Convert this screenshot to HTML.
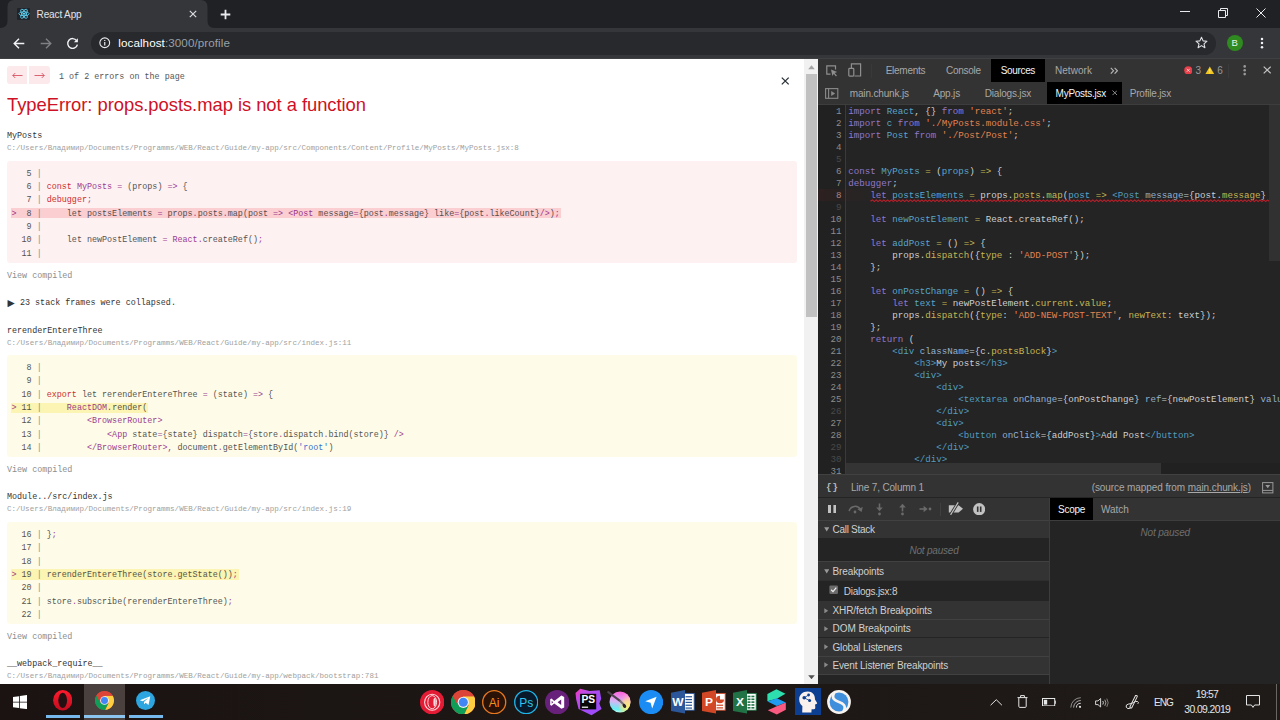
<!DOCTYPE html>
<html><head><meta charset="utf-8"><title>React App</title>
<style>
*{box-sizing:border-box;margin:0;padding:0}
html,body{width:1280px;height:720px;overflow:hidden;background:#fff;font-family:"Liberation Sans",sans-serif}
i{font-style:normal}
#root{position:relative;width:1280px;height:720px;overflow:hidden}
#root>div,#root>svg{position:absolute}
.t{white-space:pre}
.cl{opacity:.84}
.dc{opacity:.93}
.cl .k{color:#c80000}.cl .p{color:#881280}.cl .s{color:#1155cc}.cl .g{color:#777}
.dc .k{color:#9a7fd5}.dc .d{color:#5db0d7}.dc .s{color:#f28b54}.dc .o{color:#d2c057}.dc .t{color:#5db0d7}.dc .a{color:#9bbbdc}
</style></head><body>
<div id="root">
<!-- browser chrome -->
<div style="left:0.00px;top:0.00px;width:1280.00px;height:28.00px;background:#202124;"></div>
<svg style="left:0.00px;top:0.00px;" width="220" height="28" viewBox="0 0 220 28"><path d="M0 28 L0 28 Q7.5 28 7.5 21 L7.5 7 Q7.5 0 14.5 0 L200.5 0 Q207.5 0 207.5 7 L207.5 21 Q207.5 28 214.5 28 Z" fill="#35363a"/></svg>
<div style="left:0.00px;top:28.00px;width:1280.00px;height:30.50px;background:#35363a;"></div>
<div style="left:0.00px;top:58.00px;width:1280.00px;height:1.00px;background:#3f4043;"></div>
<div style="left:91.00px;top:31.50px;width:1125.00px;height:23.00px;background:#27292c;border-radius:12px"></div>
<div style="left:17.00px;top:7.50px;width:13.00px;height:12.50px;background:#20232a;border-radius:1px"></div>
<svg style="left:17.50px;top:8.00px;" width="12" height="11.5" viewBox="0 0 12 11.5"><g fill="none" stroke="#61dafb" stroke-width="0.8"><ellipse cx="6" cy="5.75" rx="5.2" ry="2"/><ellipse cx="6" cy="5.75" rx="5.2" ry="2" transform="rotate(60 6 5.75)"/><ellipse cx="6" cy="5.75" rx="5.2" ry="2" transform="rotate(120 6 5.75)"/></g><circle cx="6" cy="5.75" r="1.1" fill="#61dafb"/></svg>
<div class="t" style="left:36.60px;top:7.64px;font-family:'Liberation Sans',sans-serif;font-size:10px;line-height:13.0px;color:#e2e4e8;letter-spacing:-0.140px;">React App</div>
<svg style="left:189.00px;top:10.00px;" width="8" height="8" viewBox="0 0 8 8"><path d="M0.8 0.8 L7.2 7.2 M7.2 0.8 L0.8 7.2" stroke="#dadce0" stroke-width="1.2" fill="none"/></svg>
<svg style="left:219.50px;top:8.50px;" width="11" height="11" viewBox="0 0 11 11"><path d="M5.5 0.7 V10.3 M0.7 5.5 H10.3" stroke="#e8eaed" stroke-width="1.8" fill="none"/></svg>
<div style="left:1180.00px;top:11.00px;width:10.00px;height:1.00px;background:#e8eaed;"></div>
<svg style="left:1217.50px;top:7.50px;" width="10" height="10" viewBox="0 0 10 10"><path d="M0.5 2.5 H7.5 V9.5 H0.5 Z M2.5 2.5 V0.5 H9.5 V7.5 H7.5" stroke="#e8eaed" stroke-width="1" fill="none"/></svg>
<svg style="left:1256.00px;top:8.00px;" width="10" height="10" viewBox="0 0 10 10"><path d="M0.5 0.5 L9.5 9.5 M9.5 0.5 L0.5 9.5" stroke="#e8eaed" stroke-width="1" fill="none"/></svg>
<svg style="left:12.50px;top:37.50px;" width="12" height="11" viewBox="0 0 12 11"><path d="M6 0.8 L1.2 5.5 L6 10.2 M1.2 5.5 H11.3" stroke="#f1f3f4" stroke-width="1.4" fill="none"/></svg>
<svg style="left:39.50px;top:37.50px;" width="12" height="11" viewBox="0 0 12 11"><path d="M6 0.8 L10.8 5.5 L6 10.2 M10.8 5.5 H0.7" stroke="#7f8084" stroke-width="1.4" fill="none"/></svg>
<svg style="left:65.50px;top:36.50px;" width="13" height="13" viewBox="0 0 13 13"><path d="M10.6 3.6 A4.9 4.9 0 1 0 11.4 7.6" stroke="#f1f3f4" stroke-width="1.4" fill="none"/><path d="M11.9 1.2 V5.2 H7.9 Z" fill="#f1f3f4"/></svg>
<svg style="left:99.00px;top:37.30px;" width="11.5" height="11.5" viewBox="0 0 11.5 11.5"><circle cx="5.75" cy="5.75" r="4.9" stroke="#e8eaed" stroke-width="1.1" fill="none"/><path d="M5.75 2.9 V3.9 M5.75 5 V8.6" stroke="#e8eaed" stroke-width="1.2"/></svg>
<div class="t" style="left:118.30px;top:35.07px;font-family:'Liberation Sans',sans-serif;font-size:11.67px;line-height:15.17px;color:#9aa0a6;letter-spacing:0.069px;"><span style="color:#fff">localhost</span>:3000/profile</div>
<svg style="left:1195.00px;top:36.30px;" width="13" height="13" viewBox="0 0 13 13"><path d="M6.5 1.2 L8.1 4.9 L12 5.2 L9 7.8 L9.9 11.7 L6.5 9.6 L3.1 11.7 L4 7.8 L1 5.2 L4.9 4.9 Z" stroke="#dfe1e5" stroke-width="1.1" fill="none" stroke-linejoin="round"/></svg>
<div style="left:1226.50px;top:34.80px;width:16.50px;height:16.50px;background:#2f8a1f;border-radius:50%"></div>
<div class="t" style="left:1231.60px;top:36.93px;font-family:'Liberation Sans',sans-serif;font-size:9.5px;line-height:12.35px;color:#e9f3e6;">B</div>
<svg style="left:1259.50px;top:37.00px;" width="4" height="12" viewBox="0 0 4 12"><circle cx="2" cy="1.9" r="1.25" fill="#f1f3f4"/><circle cx="2" cy="6" r="1.25" fill="#f1f3f4"/><circle cx="2" cy="10.2" r="1.25" fill="#f1f3f4"/></svg>
<!-- error overlay page -->
<div style="left:0.00px;top:59.00px;width:804.20px;height:625.00px;background:#fff;"></div>
<div style="left:804.20px;top:59.00px;width:13.80px;height:625.00px;background:#f1f1f1;"></div>
<div style="left:805.70px;top:73.50px;width:11.00px;height:243.20px;background:#c1c1c1;"></div>
<svg style="left:807.50px;top:65.00px;" width="7" height="4.5" viewBox="0 0 7 4.5"><path d="M3.5 0.3 L6.8 4.2 H0.2 Z" fill="#a3a3a3"/></svg>
<svg style="left:807.50px;top:674.50px;" width="7" height="4.5" viewBox="0 0 7 4.5"><path d="M3.5 4.2 L6.8 0.3 H0.2 Z" fill="#505050"/></svg>
<div style="left:7.00px;top:66.00px;width:19.50px;height:18.00px;background:#fbe9eb;border-radius:3px 0 0 3px"></div>
<div style="left:29.00px;top:66.00px;width:20.50px;height:18.00px;background:#fbe9eb;border-radius:0 3px 3px 0"></div>
<svg style="left:11.50px;top:72.00px;" width="11" height="7" viewBox="0 0 11 7"><path d="M0.8 3.5 H10.5 M3.3 1 L0.8 3.5 L3.3 6" stroke="#d4364a" stroke-width="0.75" fill="none"/></svg>
<svg style="left:33.50px;top:72.00px;" width="11" height="7" viewBox="0 0 11 7"><path d="M0.5 3.5 H10.2 M7.7 1 L10.2 3.5 L7.7 6" stroke="#d4364a" stroke-width="0.75" fill="none"/></svg>
<div class="t" style="left:59.00px;top:71.70px;font-family:'Liberation Mono',monospace;font-size:8.4px;line-height:10.92px;color:#555;letter-spacing:0.004px;">1 of 2 errors on the page</div>
<div class="t" style="left:7.00px;top:92.86px;font-family:'Liberation Sans',sans-serif;font-size:18.4px;line-height:23.92px;color:#ce1126;letter-spacing:-0.042px;">TypeError: props.posts.map is not a function</div>
<svg style="left:781.00px;top:77.00px;" width="8.5" height="8" viewBox="0 0 8.5 8"><path d="M0.8 0.6 L7.7 7.4 M7.7 0.6 L0.8 7.4" stroke="#293238" stroke-width="1.3" fill="none"/></svg>
<div class="t" style="left:7.00px;top:130.80px;font-family:'Liberation Mono',monospace;font-size:8.4px;line-height:10.92px;color:#333;letter-spacing:0.003px;">MyPosts</div>
<div class="t" style="left:7.00px;top:143.58px;font-family:'Liberation Mono',monospace;font-size:7.55px;line-height:9.81px;color:#a0a0a0;letter-spacing:0.001px;">C:/Users/Владимир/Documents/Programms/WEB/React/Guide/my-app/src/Components/Content/Profile/MyPosts/MyPosts.jsx:8</div>
<div style="left:7.00px;top:161.00px;width:789.90px;height:101.50px;background:#fdf1f2;border-radius:3px"></div>
<div class="t cl" style="left:11.50px;top:168.70px;font-family:'Liberation Mono',monospace;font-size:8.4px;line-height:10.92px;color:#333;letter-spacing:0.003px;">   5<i class="g"> | </i></div>
<div class="t cl" style="left:11.50px;top:182.03px;font-family:'Liberation Mono',monospace;font-size:8.4px;line-height:10.92px;color:#333;letter-spacing:0.004px;">   6<i class="g"> | </i><i class="k">const</i> <i class="p">MyPosts</i> <i class="p">=</i> (props) <i class="p">=&gt;</i> {</div>
<div class="t cl" style="left:11.50px;top:195.37px;font-family:'Liberation Mono',monospace;font-size:8.4px;line-height:10.92px;color:#333;letter-spacing:0.004px;">   7<i class="g"> | </i><i class="k">debugger</i><i class="p">;</i></div>
<div style="left:11.00px;top:208.20px;width:549.67px;height:10.20px;background:#fbcfd2;"></div>
<div class="t cl" style="left:11.50px;top:208.70px;font-family:'Liberation Mono',monospace;font-size:8.4px;line-height:10.92px;color:#333;letter-spacing:0.004px;"><i class="p">&gt;</i>  8<i class="g"> | </i>    let postsElements <i class="p">=</i> props<i class="p">.</i>posts<i class="p">.</i>map(post <i class="p">=&gt;</i> <i class="p">&lt;</i><i class="p">Post</i> message<i class="p">=</i>{post<i class="p">.</i>message} like<i class="p">=</i>{post<i class="p">.</i>likeCount}<i class="p">/&gt;</i>)<i class="p">;</i></div>
<div class="t cl" style="left:11.50px;top:222.03px;font-family:'Liberation Mono',monospace;font-size:8.4px;line-height:10.92px;color:#333;letter-spacing:0.003px;">   9<i class="g"> | </i></div>
<div class="t cl" style="left:11.50px;top:235.37px;font-family:'Liberation Mono',monospace;font-size:8.4px;line-height:10.92px;color:#333;letter-spacing:0.004px;">  10<i class="g"> | </i>    let newPostElement <i class="p">=</i> <i class="p">React</i><i class="p">.</i>createRef()<i class="p">;</i></div>
<div class="t cl" style="left:11.50px;top:248.70px;font-family:'Liberation Mono',monospace;font-size:8.4px;line-height:10.92px;color:#333;letter-spacing:0.003px;">  11<i class="g"> | </i></div>
<div class="t" style="left:7.00px;top:271.10px;font-family:'Liberation Mono',monospace;font-size:8.4px;line-height:10.92px;color:#878e91;letter-spacing:0.004px;">View compiled</div>
<div class="t" style="left:7.5px;top:295.6px;font-family:'DejaVu Sans',sans-serif;font-size:9.4px;line-height:13px;color:#333">▶</div>
<div class="t" style="left:20.00px;top:298.30px;font-family:'Liberation Mono',monospace;font-size:8.4px;line-height:10.92px;color:#333;letter-spacing:0.004px;">23 stack frames were collapsed.</div>
<div class="t" style="left:7.00px;top:326.10px;font-family:'Liberation Mono',monospace;font-size:8.4px;line-height:10.92px;color:#333;letter-spacing:0.004px;">rerenderEntereThree</div>
<div class="t" style="left:7.00px;top:338.58px;font-family:'Liberation Mono',monospace;font-size:7.55px;line-height:9.81px;color:#a0a0a0;letter-spacing:0.001px;">C:/Users/Владимир/Documents/Programms/WEB/React/Guide/my-app/src/index.js:11</div>
<div style="left:7.00px;top:355.30px;width:789.90px;height:101.50px;background:#fefce9;border-radius:3px"></div>
<div class="t cl" style="left:11.50px;top:363.00px;font-family:'Liberation Mono',monospace;font-size:8.4px;line-height:10.92px;color:#333;letter-spacing:0.003px;">   8<i class="g"> | </i></div>
<div class="t cl" style="left:11.50px;top:376.33px;font-family:'Liberation Mono',monospace;font-size:8.4px;line-height:10.92px;color:#333;letter-spacing:0.003px;">   9<i class="g"> | </i></div>
<div class="t cl" style="left:11.50px;top:389.67px;font-family:'Liberation Mono',monospace;font-size:8.4px;line-height:10.92px;color:#333;letter-spacing:0.004px;">  10<i class="g"> | </i><i class="k">export</i> let rerenderEntereThree <i class="p">=</i> (state) <i class="p">=&gt;</i> {</div>
<div style="left:11.00px;top:402.50px;width:137.21px;height:10.20px;background:#fbf4b2;"></div>
<div class="t cl" style="left:11.50px;top:403.00px;font-family:'Liberation Mono',monospace;font-size:8.4px;line-height:10.92px;color:#333;letter-spacing:0.004px;"><i class="p">&gt;</i> 11<i class="g"> | </i>    <i class="p">ReactDOM</i><i class="p">.</i>render(</div>
<div class="t cl" style="left:11.50px;top:416.33px;font-family:'Liberation Mono',monospace;font-size:8.4px;line-height:10.92px;color:#333;letter-spacing:0.004px;">  12<i class="g"> | </i>        <i class="p">&lt;</i><i class="p">BrowserRouter</i><i class="p">&gt;</i></div>
<div class="t cl" style="left:11.50px;top:429.67px;font-family:'Liberation Mono',monospace;font-size:8.4px;line-height:10.92px;color:#333;letter-spacing:0.004px;">  13<i class="g"> | </i>            <i class="p">&lt;</i><i class="p">App</i> state<i class="p">=</i>{state} dispatch<i class="p">=</i>{store<i class="p">.</i>dispatch<i class="p">.</i>bind(store)} <i class="p">/&gt;</i></div>
<div class="t cl" style="left:11.50px;top:443.00px;font-family:'Liberation Mono',monospace;font-size:8.4px;line-height:10.92px;color:#333;letter-spacing:0.004px;">  14<i class="g"> | </i>        <i class="p">&lt;/</i><i class="p">BrowserRouter</i><i class="p">&gt;,</i> document<i class="p">.</i>getElementById(<i class="s">'root'</i>)</div>
<div class="t" style="left:7.00px;top:464.70px;font-family:'Liberation Mono',monospace;font-size:8.4px;line-height:10.92px;color:#878e91;letter-spacing:0.004px;">View compiled</div>
<div class="t" style="left:7.00px;top:491.97px;font-family:'Liberation Mono',monospace;font-size:8.4px;line-height:10.92px;color:#333;letter-spacing:0.004px;">Module../src/index.js</div>
<div class="t" style="left:7.00px;top:504.75px;font-family:'Liberation Mono',monospace;font-size:7.55px;line-height:9.81px;color:#a0a0a0;letter-spacing:0.001px;">C:/Users/Владимир/Documents/Programms/WEB/React/Guide/my-app/src/index.js:19</div>
<div style="left:7.00px;top:522.17px;width:789.90px;height:101.50px;background:#fefce9;border-radius:3px"></div>
<div class="t cl" style="left:11.50px;top:529.87px;font-family:'Liberation Mono',monospace;font-size:8.4px;line-height:10.92px;color:#333;letter-spacing:0.004px;">  16<i class="g"> | </i>}<i class="p">;</i></div>
<div class="t cl" style="left:11.50px;top:543.20px;font-family:'Liberation Mono',monospace;font-size:8.4px;line-height:10.92px;color:#333;letter-spacing:0.003px;">  17<i class="g"> | </i></div>
<div class="t cl" style="left:11.50px;top:556.54px;font-family:'Liberation Mono',monospace;font-size:8.4px;line-height:10.92px;color:#333;letter-spacing:0.003px;">  18<i class="g"> | </i></div>
<div style="left:11.00px;top:569.37px;width:227.75px;height:10.20px;background:#fbf4b2;"></div>
<div class="t cl" style="left:11.50px;top:569.87px;font-family:'Liberation Mono',monospace;font-size:8.4px;line-height:10.92px;color:#333;letter-spacing:0.004px;"><i class="p">&gt;</i> 19<i class="g"> | </i>rerenderEntereThree(store<i class="p">.</i>getState())<i class="p">;</i></div>
<div class="t cl" style="left:11.50px;top:583.20px;font-family:'Liberation Mono',monospace;font-size:8.4px;line-height:10.92px;color:#333;letter-spacing:0.003px;">  20<i class="g"> | </i></div>
<div class="t cl" style="left:11.50px;top:596.54px;font-family:'Liberation Mono',monospace;font-size:8.4px;line-height:10.92px;color:#333;letter-spacing:0.004px;">  21<i class="g"> | </i>store<i class="p">.</i>subscribe(rerenderEntereThree)<i class="p">;</i></div>
<div class="t cl" style="left:11.50px;top:609.87px;font-family:'Liberation Mono',monospace;font-size:8.4px;line-height:10.92px;color:#333;letter-spacing:0.003px;">  22<i class="g"> | </i></div>
<div class="t" style="left:7.00px;top:632.27px;font-family:'Liberation Mono',monospace;font-size:8.4px;line-height:10.92px;color:#878e91;letter-spacing:0.004px;">View compiled</div>
<div class="t" style="left:7.00px;top:658.64px;font-family:'Liberation Mono',monospace;font-size:8.4px;line-height:10.92px;color:#333;letter-spacing:0.004px;">__webpack_require__</div>
<div class="t" style="left:7.00px;top:671.92px;font-family:'Liberation Mono',monospace;font-size:7.55px;line-height:9.81px;color:#a0a0a0;letter-spacing:0.001px;">C:/Users/Владимир/Documents/Programms/WEB/React/Guide/my-app/webpack/bootstrap:781</div>
<!-- devtools -->
<div style="left:818.00px;top:59.00px;width:462.00px;height:625.00px;background:#242424;"></div>
<div style="left:818.00px;top:59.00px;width:462.00px;height:22.50px;background:#333333;"></div>
<div style="left:818.00px;top:81.50px;width:462.00px;height:0.80px;background:#3d3d3d;"></div>
<div style="left:991.00px;top:59.00px;width:54.00px;height:22.50px;background:#000;"></div>
<svg style="left:826.00px;top:64.50px;" width="12" height="12" viewBox="0 0 12 12"><path d="M9.5 4.5 V0.8 H0.8 V9.2 H4.5" stroke="#8f8f8f" stroke-width="1.2" fill="none"/><path d="M5 4.6 L11.2 7 L8.6 8 L10.9 10.6 L10 11.4 L7.8 8.8 L6.4 10.9 Z" fill="#8f8f8f"/></svg>
<svg style="left:848.00px;top:63.00px;" width="13.5" height="14" viewBox="0 0 13.5 14"><path d="M3.4 5 V0.8 H12.6 V13 H6.5" stroke="#8f8f8f" stroke-width="1.2" fill="none"/><rect x="0.8" y="5.4" width="5" height="7.7" rx="0.8" stroke="#8f8f8f" stroke-width="1.2" fill="none"/></svg>
<div style="left:870.50px;top:63.50px;width:0.80px;height:14.00px;background:#393939;"></div>
<div class="t" style="left:885.70px;top:63.83px;font-family:'Liberation Sans',sans-serif;font-size:10px;line-height:13.0px;color:#a8a8a8;letter-spacing:-0.261px;">Elements</div>
<div class="t" style="left:946.00px;top:63.83px;font-family:'Liberation Sans',sans-serif;font-size:10px;line-height:13.0px;color:#a8a8a8;letter-spacing:-0.286px;">Console</div>
<div class="t" style="left:1000.80px;top:63.83px;font-family:'Liberation Sans',sans-serif;font-size:10px;line-height:13.0px;color:#f5f5f5;letter-spacing:-0.355px;">Sources</div>
<div class="t" style="left:1055.00px;top:63.83px;font-family:'Liberation Sans',sans-serif;font-size:10px;line-height:13.0px;color:#a8a8a8;letter-spacing:0.045px;">Network</div>
<svg style="left:1109.50px;top:66.50px;" width="8.5" height="7.5" viewBox="0 0 8.5 7.5"><path d="M0.8 0.8 L3.6 3.75 L0.8 6.7 M4.6 0.8 L7.4 3.75 L4.6 6.7" stroke="#b5b5b5" stroke-width="1.1" fill="none"/></svg>
<svg style="left:1183.50px;top:65.80px;" width="8.6" height="8.6" viewBox="0 0 8.6 8.6"><circle cx="4.3" cy="4.3" r="4.1" fill="#e8414b"/><path d="M2.8 2.8 L5.8 5.8 M5.8 2.8 L2.8 5.8" stroke="#f7d0d2" stroke-width="0.9"/></svg>
<div class="t" style="left:1195.60px;top:63.83px;font-family:'Liberation Sans',sans-serif;font-size:10px;line-height:13.0px;color:#9a9a9a;letter-spacing:-1.162px;">3</div>
<svg style="left:1204.70px;top:65.50px;" width="9.6" height="8.6" viewBox="0 0 9.6 8.6"><path d="M4.8 0.4 L9.3 8.2 H0.3 Z" fill="#f2c71d"/><path d="M4.8 3 V5.6 M4.8 6.4 V7.3" stroke="#fff6c8" stroke-width="0.9"/></svg>
<div class="t" style="left:1217.30px;top:63.83px;font-family:'Liberation Sans',sans-serif;font-size:10px;line-height:13.0px;color:#9a9a9a;letter-spacing:-0.862px;">6</div>
<div style="left:1228.00px;top:63.50px;width:0.80px;height:14.00px;background:#3b3b3b;"></div>
<svg style="left:1242.50px;top:65.30px;" width="3.4" height="10.6" viewBox="0 0 3.4 10.6"><circle cx="1.7" cy="1.4" r="1.3" fill="#9a9a9a"/><circle cx="1.7" cy="5.2" r="1.3" fill="#9a9a9a"/><circle cx="1.7" cy="9.1" r="1.3" fill="#9a9a9a"/></svg>
<svg style="left:1263.00px;top:66.30px;" width="8.4" height="8" viewBox="0 0 8.4 8"><path d="M0.7 0.6 L7.7 7.4 M7.7 0.6 L0.7 7.4" stroke="#c4c4c4" stroke-width="1.2" fill="none"/></svg>
<div style="left:818.00px;top:82.30px;width:462.00px;height:22.20px;background:#333333;"></div>
<div style="left:818.00px;top:104.30px;width:462.00px;height:0.80px;background:#3d3d3d;"></div>
<div style="left:1047.00px;top:82.30px;width:75.30px;height:21.40px;background:#000;"></div>
<svg style="left:825.00px;top:88.00px;" width="13.5" height="11" viewBox="0 0 13.5 11"><rect x="0.6" y="0.6" width="12.2" height="9.7" stroke="#8a8a8a" stroke-width="1.1" fill="none"/><path d="M3.6 0.6 V10.3" stroke="#8a8a8a" stroke-width="1.1"/><path d="M6.2 3 L10.2 5.45 L6.2 7.9 Z" fill="#8a8a8a"/></svg>
<div class="t" style="left:849.80px;top:86.63px;font-family:'Liberation Sans',sans-serif;font-size:10px;line-height:13.0px;color:#a8a8a8;letter-spacing:-0.165px;">main.chunk.js</div>
<div class="t" style="left:933.20px;top:86.63px;font-family:'Liberation Sans',sans-serif;font-size:10px;line-height:13.0px;color:#a8a8a8;letter-spacing:-0.166px;">App.js</div>
<div class="t" style="left:984.80px;top:86.63px;font-family:'Liberation Sans',sans-serif;font-size:10px;line-height:13.0px;color:#a8a8a8;letter-spacing:-0.196px;">Dialogs.jsx</div>
<div class="t" style="left:1055.60px;top:86.63px;font-family:'Liberation Sans',sans-serif;font-size:10px;line-height:13.0px;color:#f5f5f5;letter-spacing:-0.268px;">MyPosts.jsx</div>
<svg style="left:1111.50px;top:90.30px;" width="5.6" height="5.6" viewBox="0 0 5.6 5.6"><path d="M0.5 0.5 L5.1 5.1 M5.1 0.5 L0.5 5.1" stroke="#9a9a9a" stroke-width="0.9" fill="none"/></svg>
<div class="t" style="left:1129.70px;top:86.63px;font-family:'Liberation Sans',sans-serif;font-size:10px;line-height:13.0px;color:#a8a8a8;letter-spacing:-0.187px;">Profile.jsx</div>
<div style="left:818.00px;top:105.00px;width:27.00px;height:369.00px;background:#212121;"></div>
<div style="left:844.70px;top:105.00px;width:0.90px;height:369.00px;background:#3a3a3a;"></div>
<div style="left:818.00px;top:189.00px;width:60.00px;height:12.00px;background:linear-gradient(90deg,rgba(110,30,30,.16),rgba(110,30,30,0));"></div>
<div class="t" style="left:835.90px;top:106.19px;font-family:'Liberation Mono',monospace;font-size:9.18px;line-height:11.93px;color:#8c8c8c;letter-spacing:-0.021px;">1</div>
<div class="t dc" style="left:848.30px;top:106.19px;font-family:'Liberation Mono',monospace;font-size:9.18px;line-height:11.93px;color:#dcdcdc;letter-spacing:-0.009px;"><i class="k">import</i> <i class="d">React</i>, {} <i class="k">from</i> <i class="s">'react'</i>;</div>
<div class="t" style="left:835.90px;top:118.19px;font-family:'Liberation Mono',monospace;font-size:9.18px;line-height:11.93px;color:#8c8c8c;letter-spacing:-0.021px;">2</div>
<div class="t dc" style="left:848.30px;top:118.19px;font-family:'Liberation Mono',monospace;font-size:9.18px;line-height:11.93px;color:#dcdcdc;letter-spacing:-0.009px;"><i class="k">import</i> <i class="d">c</i> <i class="k">from</i> <i class="s">'./MyPosts.module.css'</i>;</div>
<div class="t" style="left:835.90px;top:130.19px;font-family:'Liberation Mono',monospace;font-size:9.18px;line-height:11.93px;color:#8c8c8c;letter-spacing:-0.021px;">3</div>
<div class="t dc" style="left:848.30px;top:130.19px;font-family:'Liberation Mono',monospace;font-size:9.18px;line-height:11.93px;color:#dcdcdc;letter-spacing:-0.009px;"><i class="k">import</i> <i class="d">Post</i> <i class="k">from</i> <i class="s">'./Post/Post'</i>;</div>
<div class="t" style="left:835.90px;top:142.19px;font-family:'Liberation Mono',monospace;font-size:9.18px;line-height:11.93px;color:#8c8c8c;letter-spacing:-0.021px;">4</div>
<div class="t" style="left:835.90px;top:154.19px;font-family:'Liberation Mono',monospace;font-size:9.18px;line-height:11.93px;color:#494949;letter-spacing:-0.021px;">5</div>
<div class="t" style="left:835.90px;top:166.19px;font-family:'Liberation Mono',monospace;font-size:9.18px;line-height:11.93px;color:#8c8c8c;letter-spacing:-0.021px;">6</div>
<div class="t dc" style="left:848.30px;top:166.19px;font-family:'Liberation Mono',monospace;font-size:9.18px;line-height:11.93px;color:#dcdcdc;letter-spacing:-0.009px;"><i class="k">const</i> <i class="d">MyPosts</i> <i class="o">=</i> (<i class="d">props</i>) <i class="o">=&gt;</i> {</div>
<div class="t" style="left:835.90px;top:178.19px;font-family:'Liberation Mono',monospace;font-size:9.18px;line-height:11.93px;color:#8c8c8c;letter-spacing:-0.021px;">7</div>
<div class="t dc" style="left:848.30px;top:178.19px;font-family:'Liberation Mono',monospace;font-size:9.18px;line-height:11.93px;color:#dcdcdc;letter-spacing:-0.010px;"><i class="k">debugger</i>;</div>
<div class="t" style="left:835.90px;top:190.19px;font-family:'Liberation Mono',monospace;font-size:9.18px;line-height:11.93px;color:#a88486;letter-spacing:-0.021px;">8</div>
<div class="t dc" style="left:848.30px;top:190.19px;font-family:'Liberation Mono',monospace;font-size:9.18px;line-height:11.93px;color:#dcdcdc;letter-spacing:-0.009px;">    <i class="k">let</i> <i class="d">postsElements</i> <i class="o">=</i> props.<i class="o">posts</i>.<i class="o">map</i>(<i class="d">post</i> <i class="o">=&gt;</i> <i class="t dc">&lt;Post</i> <i class="a">message</i>={post.<i class="o">message</i>} <i class="a">like</i>={post.<i class="o">likeCount</i>}<i class="t dc">/&gt;</i>);</div>
<div class="t" style="left:835.90px;top:202.19px;font-family:'Liberation Mono',monospace;font-size:9.18px;line-height:11.93px;color:#494949;letter-spacing:-0.021px;">9</div>
<div class="t" style="left:830.41px;top:214.19px;font-family:'Liberation Mono',monospace;font-size:9.18px;line-height:11.93px;color:#8c8c8c;letter-spacing:-0.013px;">10</div>
<div class="t dc" style="left:848.30px;top:214.19px;font-family:'Liberation Mono',monospace;font-size:9.18px;line-height:11.93px;color:#dcdcdc;letter-spacing:-0.009px;">    <i class="k">let</i> <i class="d">newPostElement</i> <i class="o">=</i> React.createRef();</div>
<div class="t" style="left:830.41px;top:226.19px;font-family:'Liberation Mono',monospace;font-size:9.18px;line-height:11.93px;color:#8c8c8c;letter-spacing:-0.013px;">11</div>
<div class="t" style="left:830.41px;top:238.19px;font-family:'Liberation Mono',monospace;font-size:9.18px;line-height:11.93px;color:#8c8c8c;letter-spacing:-0.013px;">12</div>
<div class="t dc" style="left:848.30px;top:238.19px;font-family:'Liberation Mono',monospace;font-size:9.18px;line-height:11.93px;color:#dcdcdc;letter-spacing:-0.009px;">    <i class="k">let</i> <i class="d">addPost</i> <i class="o">=</i> () <i class="o">=&gt;</i> {</div>
<div class="t" style="left:830.41px;top:250.19px;font-family:'Liberation Mono',monospace;font-size:9.18px;line-height:11.93px;color:#8c8c8c;letter-spacing:-0.013px;">13</div>
<div class="t dc" style="left:848.30px;top:250.19px;font-family:'Liberation Mono',monospace;font-size:9.18px;line-height:11.93px;color:#dcdcdc;letter-spacing:-0.009px;">        props.<i class="o">dispatch</i>({<i class="o">type</i> : <i class="s">'ADD-POST'</i>});</div>
<div class="t" style="left:830.41px;top:262.19px;font-family:'Liberation Mono',monospace;font-size:9.18px;line-height:11.93px;color:#8c8c8c;letter-spacing:-0.013px;">14</div>
<div class="t dc" style="left:848.30px;top:262.19px;font-family:'Liberation Mono',monospace;font-size:9.18px;line-height:11.93px;color:#dcdcdc;letter-spacing:-0.010px;">    };</div>
<div class="t" style="left:830.41px;top:274.19px;font-family:'Liberation Mono',monospace;font-size:9.18px;line-height:11.93px;color:#8c8c8c;letter-spacing:-0.013px;">15</div>
<div class="t" style="left:830.41px;top:286.19px;font-family:'Liberation Mono',monospace;font-size:9.18px;line-height:11.93px;color:#8c8c8c;letter-spacing:-0.013px;">16</div>
<div class="t dc" style="left:848.30px;top:286.19px;font-family:'Liberation Mono',monospace;font-size:9.18px;line-height:11.93px;color:#dcdcdc;letter-spacing:-0.009px;">    <i class="k">let</i> <i class="d">onPostChange</i> <i class="o">=</i> () <i class="o">=&gt;</i> {</div>
<div class="t" style="left:830.41px;top:298.19px;font-family:'Liberation Mono',monospace;font-size:9.18px;line-height:11.93px;color:#8c8c8c;letter-spacing:-0.013px;">17</div>
<div class="t dc" style="left:848.30px;top:298.19px;font-family:'Liberation Mono',monospace;font-size:9.18px;line-height:11.93px;color:#dcdcdc;letter-spacing:-0.009px;">        <i class="k">let</i> <i class="d">text</i> <i class="o">=</i> newPostElement.<i class="o">current</i>.<i class="o">value</i>;</div>
<div class="t" style="left:830.41px;top:310.19px;font-family:'Liberation Mono',monospace;font-size:9.18px;line-height:11.93px;color:#8c8c8c;letter-spacing:-0.013px;">18</div>
<div class="t dc" style="left:848.30px;top:310.19px;font-family:'Liberation Mono',monospace;font-size:9.18px;line-height:11.93px;color:#dcdcdc;letter-spacing:-0.009px;">        props.<i class="o">dispatch</i>({<i class="o">type</i>: <i class="s">'ADD-NEW-POST-TEXT'</i>, <i class="o">newText</i>: text});</div>
<div class="t" style="left:830.41px;top:322.19px;font-family:'Liberation Mono',monospace;font-size:9.18px;line-height:11.93px;color:#8c8c8c;letter-spacing:-0.013px;">19</div>
<div class="t dc" style="left:848.30px;top:322.19px;font-family:'Liberation Mono',monospace;font-size:9.18px;line-height:11.93px;color:#dcdcdc;letter-spacing:-0.010px;">    };</div>
<div class="t" style="left:830.41px;top:334.19px;font-family:'Liberation Mono',monospace;font-size:9.18px;line-height:11.93px;color:#8c8c8c;letter-spacing:-0.013px;">20</div>
<div class="t dc" style="left:848.30px;top:334.19px;font-family:'Liberation Mono',monospace;font-size:9.18px;line-height:11.93px;color:#dcdcdc;letter-spacing:-0.010px;">    <i class="k">return</i> (</div>
<div class="t" style="left:830.41px;top:346.19px;font-family:'Liberation Mono',monospace;font-size:9.18px;line-height:11.93px;color:#8c8c8c;letter-spacing:-0.013px;">21</div>
<div class="t dc" style="left:848.30px;top:346.19px;font-family:'Liberation Mono',monospace;font-size:9.18px;line-height:11.93px;color:#dcdcdc;letter-spacing:-0.009px;">        <i class="t dc">&lt;div</i> <i class="a">className</i>={c.<i class="o">postsBlock</i>}<i class="t dc">&gt;</i></div>
<div class="t" style="left:830.41px;top:358.19px;font-family:'Liberation Mono',monospace;font-size:9.18px;line-height:11.93px;color:#8c8c8c;letter-spacing:-0.013px;">22</div>
<div class="t dc" style="left:848.30px;top:358.19px;font-family:'Liberation Mono',monospace;font-size:9.18px;line-height:11.93px;color:#dcdcdc;letter-spacing:-0.009px;">            <i class="t dc">&lt;h3&gt;</i>My posts<i class="t dc">&lt;/h3&gt;</i></div>
<div class="t" style="left:830.41px;top:370.19px;font-family:'Liberation Mono',monospace;font-size:9.18px;line-height:11.93px;color:#8c8c8c;letter-spacing:-0.013px;">23</div>
<div class="t dc" style="left:848.30px;top:370.19px;font-family:'Liberation Mono',monospace;font-size:9.18px;line-height:11.93px;color:#dcdcdc;letter-spacing:-0.010px;">            <i class="t dc">&lt;div&gt;</i></div>
<div class="t" style="left:830.41px;top:382.19px;font-family:'Liberation Mono',monospace;font-size:9.18px;line-height:11.93px;color:#8c8c8c;letter-spacing:-0.013px;">24</div>
<div class="t dc" style="left:848.30px;top:382.19px;font-family:'Liberation Mono',monospace;font-size:9.18px;line-height:11.93px;color:#dcdcdc;letter-spacing:-0.009px;">                <i class="t dc">&lt;div&gt;</i></div>
<div class="t" style="left:830.41px;top:394.19px;font-family:'Liberation Mono',monospace;font-size:9.18px;line-height:11.93px;color:#8c8c8c;letter-spacing:-0.013px;">25</div>
<div class="t dc" style="left:848.30px;top:394.19px;font-family:'Liberation Mono',monospace;font-size:9.18px;line-height:11.93px;color:#dcdcdc;letter-spacing:-0.009px;">                    <i class="t dc">&lt;textarea</i> <i class="a">onChange</i>={onPostChange} <i class="a">ref</i>={newPostElement} <i class="a">value</i>={props.<i class="o">newPostText</i>}<i class="t dc">/&gt;</i></div>
<div class="t" style="left:830.41px;top:406.19px;font-family:'Liberation Mono',monospace;font-size:9.18px;line-height:11.93px;color:#494949;letter-spacing:-0.013px;">26</div>
<div class="t dc" style="left:848.30px;top:406.19px;font-family:'Liberation Mono',monospace;font-size:9.18px;line-height:11.93px;color:#dcdcdc;letter-spacing:-0.009px;">                <i class="t dc">&lt;/div&gt;</i></div>
<div class="t" style="left:830.41px;top:418.19px;font-family:'Liberation Mono',monospace;font-size:9.18px;line-height:11.93px;color:#8c8c8c;letter-spacing:-0.013px;">27</div>
<div class="t dc" style="left:848.30px;top:418.19px;font-family:'Liberation Mono',monospace;font-size:9.18px;line-height:11.93px;color:#dcdcdc;letter-spacing:-0.009px;">                <i class="t dc">&lt;div&gt;</i></div>
<div class="t" style="left:830.41px;top:430.19px;font-family:'Liberation Mono',monospace;font-size:9.18px;line-height:11.93px;color:#8c8c8c;letter-spacing:-0.013px;">28</div>
<div class="t dc" style="left:848.30px;top:430.19px;font-family:'Liberation Mono',monospace;font-size:9.18px;line-height:11.93px;color:#dcdcdc;letter-spacing:-0.009px;">                    <i class="t dc">&lt;button</i> <i class="a">onClick</i>={addPost}<i class="t dc">&gt;</i>Add Post<i class="t dc">&lt;/button&gt;</i></div>
<div class="t" style="left:830.41px;top:442.19px;font-family:'Liberation Mono',monospace;font-size:9.18px;line-height:11.93px;color:#494949;letter-spacing:-0.013px;">29</div>
<div class="t dc" style="left:848.30px;top:442.19px;font-family:'Liberation Mono',monospace;font-size:9.18px;line-height:11.93px;color:#dcdcdc;letter-spacing:-0.009px;">                <i class="t dc">&lt;/div&gt;</i></div>
<div class="t" style="left:830.41px;top:454.19px;font-family:'Liberation Mono',monospace;font-size:9.18px;line-height:11.93px;color:#494949;letter-spacing:-0.013px;">30</div>
<div class="t dc" style="left:848.30px;top:454.19px;font-family:'Liberation Mono',monospace;font-size:9.18px;line-height:11.93px;color:#dcdcdc;letter-spacing:-0.009px;">            <i class="t dc">&lt;/div&gt;</i></div>
<div class="t" style="left:830.41px;top:466.19px;font-family:'Liberation Mono',monospace;font-size:9.18px;line-height:11.93px;color:#8c8c8c;letter-spacing:-0.013px;">31</div>
<svg style="left:0.00px;top:0.00px;pointer-events:none" width="1280" height="720" viewBox="0 0 1280 720"><path d="M870.5 201.3 L872.4 199.9 L874.3 201.6 L876.2 199.9 L878.1 201.6 L880.0 199.9 L881.9 201.6 L883.8 199.9 L885.7 201.6 L887.6 199.9 L889.5 201.6 L891.4 199.9 L893.3 201.6 L895.2 199.9 L897.1 201.6 L899.0 199.9 L900.9 201.6 L902.8 199.9 L904.7 201.6 L906.6 199.9 L908.5 201.6 L910.4 199.9 L912.3 201.6 L914.2 199.9 L916.1 201.6 L918.0 199.9 L919.9 201.6 L921.8 199.9 L923.7 201.6 L925.6 199.9 L927.5 201.6 L929.4 199.9 L931.3 201.6 L933.2 199.9 L935.1 201.6 L937.0 199.9 L938.9 201.6 L940.8 199.9 L942.7 201.6 L944.6 199.9 L946.5 201.6 L948.4 199.9 L950.3 201.6 L952.2 199.9 L954.1 201.6 L956.0 199.9 L957.9 201.6 L959.8 199.9 L961.7 201.6 L963.6 199.9 L965.5 201.6 L967.4 199.9 L969.3 201.6 L971.2 199.9 L973.1 201.6 L975.0 199.9 L976.9 201.6 L978.8 199.9 L980.7 201.6 L982.6 199.9 L984.5 201.6 L986.4 199.9 L988.3 201.6 L990.2 199.9 L992.1 201.6 L994.0 199.9 L995.9 201.6 L997.8 199.9 L999.7 201.6 L1001.6 199.9 L1003.5 201.6 L1005.4 199.9 L1007.3 201.6 L1009.2 199.9 L1011.1 201.6 L1013.0 199.9 L1014.9 201.6 L1016.8 199.9 L1018.7 201.6 L1020.6 199.9 L1022.5 201.6 L1024.4 199.9 L1026.3 201.6 L1028.2 199.9 L1030.1 201.6 L1032.0 199.9 L1033.9 201.6 L1035.8 199.9 L1037.7 201.6 L1039.6 199.9 L1041.5 201.6 L1043.4 199.9 L1045.3 201.6 L1047.2 199.9 L1049.1 201.6 L1051.0 199.9 L1052.9 201.6 L1054.8 199.9 L1056.7 201.6 L1058.6 199.9 L1060.5 201.6 L1062.4 199.9 L1064.3 201.6 L1066.2 199.9 L1068.1 201.6 L1070.0 199.9 L1071.9 201.6 L1073.8 199.9 L1075.7 201.6 L1077.6 199.9 L1079.5 201.6 L1081.4 199.9 L1083.3 201.6 L1085.2 199.9 L1087.1 201.6 L1089.0 199.9 L1090.9 201.6 L1092.8 199.9 L1094.7 201.6 L1096.6 199.9 L1098.5 201.6 L1100.4 199.9 L1102.3 201.6 L1104.2 199.9 L1106.1 201.6 L1108.0 199.9 L1109.9 201.6 L1111.8 199.9 L1113.7 201.6 L1115.6 199.9 L1117.5 201.6 L1119.4 199.9 L1121.3 201.6 L1123.2 199.9 L1125.1 201.6 L1127.0 199.9 L1128.9 201.6 L1130.8 199.9 L1132.7 201.6 L1134.6 199.9 L1136.5 201.6 L1138.4 199.9 L1140.3 201.6 L1142.2 199.9 L1144.1 201.6 L1146.0 199.9 L1147.9 201.6 L1149.8 199.9 L1151.7 201.6 L1153.6 199.9 L1155.5 201.6 L1157.4 199.9 L1159.3 201.6 L1161.2 199.9 L1163.1 201.6 L1165.0 199.9 L1166.9 201.6 L1168.8 199.9 L1170.7 201.6 L1172.6 199.9 L1174.5 201.6 L1176.4 199.9 L1178.3 201.6 L1180.2 199.9 L1182.1 201.6 L1184.0 199.9 L1185.9 201.6 L1187.8 199.9 L1189.7 201.6 L1191.6 199.9 L1193.5 201.6 L1195.4 199.9 L1197.3 201.6 L1199.2 199.9 L1201.1 201.6 L1203.0 199.9 L1204.9 201.6 L1206.8 199.9 L1208.7 201.6 L1210.6 199.9 L1212.5 201.6 L1214.4 199.9 L1216.3 201.6 L1218.2 199.9 L1220.1 201.6 L1222.0 199.9 L1223.9 201.6 L1225.8 199.9 L1227.7 201.6 L1229.6 199.9 L1231.5 201.6 L1233.4 199.9 L1235.3 201.6 L1237.2 199.9 L1239.1 201.6 L1241.0 199.9 L1242.9 201.6 L1244.8 199.9 L1246.7 201.6 L1248.6 199.9 L1250.5 201.6 L1252.4 199.9 L1254.3 201.6 L1256.2 199.9 L1258.1 201.6 L1260.0 199.9 L1261.9 201.6 L1263.8 199.9 L1265.7 201.6 L1267.6 199.9 L1269.5 201.6" stroke="#c01f2a" stroke-width="1.15" fill="none"/></svg>
<div style="left:1268.50px;top:105.00px;width:11.50px;height:156.00px;background:#313131;"></div>
<div style="left:845.50px;top:463.00px;width:434.50px;height:11.00px;background:#212121;"></div>
<div style="left:845.50px;top:463.00px;width:315.00px;height:11.00px;background:#343434;"></div>
<div style="left:818.00px;top:474.00px;width:462.00px;height:0.80px;background:#414141;"></div>
<div style="left:818.00px;top:474.80px;width:462.00px;height:22.70px;background:#333333;"></div>
<div class="t" style="left:826.00px;top:481.60px;font-family:'Liberation Mono',monospace;font-size:9.6px;line-height:12.48px;color:#b9b9b9;letter-spacing:0.542px;font-weight:bold;">{}</div>
<div class="t" style="left:850.90px;top:480.64px;font-family:'Liberation Sans',sans-serif;font-size:10px;line-height:13.0px;color:#a8a8a8;letter-spacing:-0.163px;">Line 7, Column 1</div>
<div class="t" style="left:1091.70px;top:480.64px;font-family:'Liberation Sans',sans-serif;font-size:10px;line-height:13.0px;color:#a8a8a8;letter-spacing:-0.088px;">(source mapped from <u>main.chunk.js</u>)</div>
<svg style="left:1262.00px;top:482.00px;" width="11.5" height="11.5" viewBox="0 0 11.5 11.5"><rect x="0.6" y="0.6" width="10.3" height="10.3" stroke="#9a9a9a" stroke-width="1" fill="none"/><path d="M0.6 8.4 H10.9" stroke="#9a9a9a" stroke-width="1"/><path d="M3.3 3 H8.2 L5.75 6.2 Z" fill="#9a9a9a"/></svg>
<div style="left:818.00px;top:497.50px;width:462.00px;height:0.80px;background:#414141;"></div>
<div style="left:818.00px;top:498.30px;width:462.00px;height:21.50px;background:#333333;"></div>
<div style="left:1049.00px;top:498.00px;width:1.00px;height:186.00px;background:#3d3d3d;"></div>
<svg style="left:827.80px;top:504.80px;" width="8.6" height="8" viewBox="0 0 8.6 8"><rect x="0" y="0" width="3" height="8" fill="#c2c2c2"/><rect x="5.4" y="0" width="3" height="8" fill="#c2c2c2"/></svg>
<svg style="left:848.00px;top:503.50px;" width="15.5" height="10" viewBox="0 0 15.5 10"><path d="M1.2 7.2 A6 6 0 0 1 12.4 5.6" stroke="#6a6a6a" stroke-width="1.5" fill="none"/><path d="M14.8 3 L13.6 8 L9.4 5.3 Z" fill="#6a6a6a"/><circle cx="7" cy="8" r="1.4" fill="#6a6a6a"/></svg>
<svg style="left:874.50px;top:502.50px;" width="9" height="13" viewBox="0 0 9 13"><path d="M4.5 0.5 V6" stroke="#6a6a6a" stroke-width="1.6"/><path d="M1.2 4.4 H7.8 L4.5 8.2 Z" fill="#6a6a6a"/><circle cx="4.5" cy="11" r="1.4" fill="#6a6a6a"/></svg>
<svg style="left:897.50px;top:502.50px;" width="9" height="13" viewBox="0 0 9 13"><path d="M4.5 3 V8.4" stroke="#6a6a6a" stroke-width="1.6"/><path d="M1.2 4.6 H7.8 L4.5 0.8 Z" fill="#6a6a6a"/><circle cx="4.5" cy="11" r="1.4" fill="#6a6a6a"/></svg>
<svg style="left:918.50px;top:504.50px;" width="13" height="8" viewBox="0 0 13 8"><path d="M0.5 4 H6" stroke="#6a6a6a" stroke-width="1.6"/><path d="M4.6 0.8 V7.2 L8.6 4 Z" fill="#6a6a6a"/><circle cx="11" cy="4" r="1.4" fill="#6a6a6a"/></svg>
<div style="left:940.00px;top:502.50px;width:0.80px;height:13.00px;background:#404040;"></div>
<svg style="left:947.50px;top:502.30px;" width="16" height="13" viewBox="0 0 16 13"><path d="M0.8 3.2 H10.6 L15 6.8 L10.6 10.4 H0.8 Z" fill="#c2c2c2"/><path d="M2.6 12.8 L10.2 0.4" stroke="#333" stroke-width="3"/><path d="M2.6 12.8 L10.2 0.4" stroke="#c2c2c2" stroke-width="1.2"/></svg>
<svg style="left:972.80px;top:502.60px;" width="12.4" height="12.4" viewBox="0 0 12.4 12.4"><circle cx="6.2" cy="6.2" r="6.1" fill="#c2c2c2"/><rect x="3.9" y="3.5" width="1.6" height="5.4" fill="#333"/><rect x="6.9" y="3.5" width="1.6" height="5.4" fill="#333"/></svg>
<div style="left:1050.00px;top:498.30px;width:43.20px;height:21.30px;background:#000;"></div>
<div class="t" style="left:1058.00px;top:503.04px;font-family:'Liberation Sans',sans-serif;font-size:10px;line-height:13.0px;color:#f5f5f5;letter-spacing:-0.272px;">Scope</div>
<div class="t" style="left:1101.00px;top:503.04px;font-family:'Liberation Sans',sans-serif;font-size:10px;line-height:13.0px;color:#a8a8a8;letter-spacing:-0.034px;">Watch</div>
<div style="left:1050.00px;top:519.80px;width:230.00px;height:0.80px;background:#3d3d3d;"></div>
<div class="t" style="left:1140.50px;top:525.53px;font-family:'Liberation Sans',sans-serif;font-size:10px;line-height:13.0px;color:#6f6f6f;letter-spacing:-0.166px;font-style:italic;">Not paused</div>
<div style="left:818.00px;top:519.80px;width:231.00px;height:0.80px;background:#414141;"></div>
<div style="left:818.00px;top:520.60px;width:231.00px;height:17.40px;background:#333333;"></div>
<svg style="left:823.60px;top:527.40px;" width="5.4" height="4.8" viewBox="0 0 5.4 4.8"><path d="M0.2 0.3 H5.2 L2.7 4.6 Z" fill="#9a9a9a"/></svg>
<div class="t" style="left:832.50px;top:523.03px;font-family:'Liberation Sans',sans-serif;font-size:10px;line-height:13.0px;color:#d0d0d0;letter-spacing:-0.282px;">Call Stack</div>
<div class="t" style="left:909.40px;top:543.83px;font-family:'Liberation Sans',sans-serif;font-size:10px;line-height:13.0px;color:#6f6f6f;letter-spacing:-0.196px;font-style:italic;">Not paused</div>
<div style="left:818.00px;top:561.00px;width:231.00px;height:0.80px;background:#414141;"></div>
<div style="left:818.00px;top:561.80px;width:231.00px;height:18.20px;background:#333333;"></div>
<svg style="left:823.60px;top:569.10px;" width="5.4" height="4.8" viewBox="0 0 5.4 4.8"><path d="M0.2 0.3 H5.2 L2.7 4.6 Z" fill="#9a9a9a"/></svg>
<div class="t" style="left:832.50px;top:564.74px;font-family:'Liberation Sans',sans-serif;font-size:10px;line-height:13.0px;color:#d0d0d0;letter-spacing:-0.119px;">Breakpoints</div>
<div style="left:818.00px;top:580.00px;width:231.00px;height:0.60px;background:#2e2e2e;"></div>
<svg style="left:828.60px;top:585.30px;" width="9.4" height="9.4" viewBox="0 0 9.4 9.4"><rect x="0.4" y="0.4" width="8.6" height="8.6" rx="1.2" fill="#6b6b6b"/><path d="M2.2 4.8 L4 6.6 L7.3 2.6" stroke="#f0f0f0" stroke-width="1.2" fill="none"/></svg>
<div class="t" style="left:843.80px;top:584.74px;font-family:'Liberation Sans',sans-serif;font-size:10px;line-height:13.0px;color:#cfcfcf;letter-spacing:-0.254px;">Dialogs.jsx:8</div>
<div style="left:818.00px;top:600.60px;width:231.00px;height:0.80px;background:#414141;"></div>
<div style="left:818.00px;top:601.40px;width:231.00px;height:17.50px;background:#333333;"></div>
<svg style="left:824.20px;top:607.90px;" width="4.4" height="5.6" viewBox="0 0 4.4 5.6"><path d="M0.3 0.2 V5.4 L4.2 2.8 Z" fill="#8a8a8a"/></svg>
<div class="t" style="left:832.50px;top:604.33px;font-family:'Liberation Sans',sans-serif;font-size:10px;line-height:13.0px;color:#d0d0d0;letter-spacing:-0.080px;">XHR/fetch Breakpoints</div>
<div style="left:818.00px;top:618.90px;width:231.00px;height:0.80px;background:#414141;"></div>
<div style="left:818.00px;top:619.70px;width:231.00px;height:17.80px;background:#333333;"></div>
<svg style="left:824.20px;top:625.90px;" width="4.4" height="5.6" viewBox="0 0 4.4 5.6"><path d="M0.3 0.2 V5.4 L4.2 2.8 Z" fill="#8a8a8a"/></svg>
<div class="t" style="left:832.50px;top:622.33px;font-family:'Liberation Sans',sans-serif;font-size:10px;line-height:13.0px;color:#d0d0d0;letter-spacing:-0.055px;">DOM Breakpoints</div>
<div style="left:818.00px;top:637.50px;width:231.00px;height:0.80px;background:#414141;"></div>
<div style="left:818.00px;top:638.30px;width:231.00px;height:17.40px;background:#333333;"></div>
<svg style="left:824.20px;top:644.40px;" width="4.4" height="5.6" viewBox="0 0 4.4 5.6"><path d="M0.3 0.2 V5.4 L4.2 2.8 Z" fill="#8a8a8a"/></svg>
<div class="t" style="left:832.50px;top:640.83px;font-family:'Liberation Sans',sans-serif;font-size:10px;line-height:13.0px;color:#d0d0d0;letter-spacing:-0.173px;">Global Listeners</div>
<div style="left:818.00px;top:655.70px;width:231.00px;height:0.80px;background:#414141;"></div>
<div style="left:818.00px;top:656.50px;width:231.00px;height:17.40px;background:#333333;"></div>
<svg style="left:824.20px;top:662.40px;" width="4.4" height="5.6" viewBox="0 0 4.4 5.6"><path d="M0.3 0.2 V5.4 L4.2 2.8 Z" fill="#8a8a8a"/></svg>
<div class="t" style="left:832.50px;top:658.83px;font-family:'Liberation Sans',sans-serif;font-size:10px;line-height:13.0px;color:#d0d0d0;letter-spacing:-0.154px;">Event Listener Breakpoints</div>
<div style="left:818.00px;top:673.90px;width:231.00px;height:0.80px;background:#414141;"></div>
<!-- taskbar -->
<div style="left:0.00px;top:684.00px;width:1280.00px;height:36.00px;background:linear-gradient(90deg,#1a1312 0%,#1c1615 40%,#1f1b18 100%);"></div>
<div style="left:84.00px;top:684.00px;width:41.00px;height:36.00px;background:#4a403e;"></div>
<div style="left:46.00px;top:715.00px;width:34.00px;height:2.50px;background:#76b9ed;"></div>
<div style="left:84.00px;top:715.00px;width:41.00px;height:2.50px;background:#8cc4f0;"></div>
<div style="left:128.50px;top:715.00px;width:34.50px;height:2.50px;background:#76b9ed;"></div>
<svg style="left:12.80px;top:694.80px;" width="14.6" height="14.2" viewBox="0 0 14.6 14.2"><path d="M0 2 L6 1.2 V6.8 H0 Z M6.8 1.1 L14.6 0 V6.8 H6.8 Z M0 7.5 H6 V13.1 L0 12.3 Z M6.8 7.5 H14.6 V14.2 L6.8 13.2 Z" fill="#fff"/></svg>
<svg style="left:52.80px;top:690.00px;" width="19.4" height="20.6" viewBox="0 0 19.4 20.6"><defs><linearGradient id="og" x1="0" y1="0" x2="0" y2="1"><stop offset="0" stop-color="#ff1b2d"/><stop offset="1" stop-color="#c20d20"/></linearGradient></defs><ellipse cx="9.7" cy="10.3" rx="9.6" ry="10.2" fill="url(#og)"/><ellipse cx="9.7" cy="10.3" rx="4.4" ry="7.6" fill="#241012"/></svg>
<svg style="left:94.70px;top:690.80px;" width="19" height="19" viewBox="0 0 24 24"><circle cx="12" cy="12" r="12" fill="#db4437"/><path d="M12 12 L1.6 6 A12 12 0 0 0 12.9 23.97 L17.2 15 Z" fill="#0f9d58"/><path d="M12 12 L17.2 15 L12.9 23.97 A12 12 0 0 0 22.4 6 H12 Z" fill="#ffcd40"/><path d="M1.6 6 A12 12 0 0 1 22.4 6 H12 L6.8 15 Z" fill="#db4437"/><circle cx="12" cy="12" r="5.5" fill="#f1f1f1"/><circle cx="12" cy="12" r="4.4" fill="#4285f4"/></svg>
<svg style="left:135.80px;top:690.80px;" width="19" height="19" viewBox="0 0 19 19"><circle cx="9.5" cy="9.5" r="9.5" fill="#2ca5e0"/><path d="M3.8 9.3 L14.3 5.2 L12.5 14 L9.6 11.8 L8.1 13.3 L7.9 10.9 L12.3 7 L6.7 10.3 Z" fill="#fff"/></svg>
<svg style="left:419.70px;top:689.70px;" width="24.4" height="24.4" viewBox="0 0 24.4 24.4"><circle cx="12.2" cy="12.2" r="12.2" fill="#e31b34"/><ellipse cx="12.2" cy="12.2" rx="7.6" ry="8" fill="none" stroke="#ffd9dd" stroke-width="1.1"/><ellipse cx="12.2" cy="12.2" rx="4.4" ry="6.6" fill="none" stroke="#ffd9dd" stroke-width="1"/><ellipse cx="14.6" cy="12.2" rx="1.2" ry="4.2" fill="#ffd9dd"/></svg>
<svg style="left:450.80px;top:689.60px;" width="24.6" height="24.6" viewBox="0 0 24 24"><circle cx="12" cy="12" r="12" fill="#db4437"/><path d="M12 12 L1.6 6 A12 12 0 0 0 12.9 23.97 L17.2 15 Z" fill="#0f9d58"/><path d="M12 12 L17.2 15 L12.9 23.97 A12 12 0 0 0 22.4 6 H12 Z" fill="#ffcd40"/><path d="M1.6 6 A12 12 0 0 1 22.4 6 H12 L6.8 15 Z" fill="#db4437"/><circle cx="12" cy="12" r="5.5" fill="#f1f1f1"/><circle cx="12" cy="12" r="4.4" fill="#4285f4"/></svg>
<svg style="left:482.20px;top:689.70px;" width="24.4" height="24.4" viewBox="0 0 24.4 24.4"><circle cx="12.2" cy="12.2" r="11.5" fill="#2a1206" stroke="#e8781e" stroke-width="1.3"/><text x="12.2" y="16.8" font-family="Liberation Sans,sans-serif" font-size="12" fill="#f7901e" text-anchor="middle">Ai</text></svg>
<svg style="left:513.80px;top:689.70px;" width="24.4" height="24.4" viewBox="0 0 24.4 24.4"><circle cx="12.2" cy="12.2" r="11.5" fill="#08192b" stroke="#1fb5e8" stroke-width="1.3"/><text x="12.2" y="16.6" font-family="Liberation Sans,sans-serif" font-size="12" fill="#31c5f0" text-anchor="middle">Ps</text></svg>
<svg style="left:545.00px;top:689.70px;" width="24.4" height="24.4" viewBox="0 0 24.4 24.4"><circle cx="12.2" cy="12.2" r="12.2" fill="#68217a"/><path d="M16.4 5.6 L19.2 6.9 V17.5 L16.4 18.8 L9.3 13.4 L6.5 15.8 L5.2 15.1 V9.3 L6.5 8.6 L9.3 11 Z M16.2 9.4 L12.6 12.2 L16.2 15 Z M6.7 10.7 V13.7 L8.2 12.2 Z" fill="#fff" fill-rule="evenodd"/></svg>
<svg style="left:575.00px;top:688.00px;" width="27" height="28" viewBox="0 0 27 28"><defs><linearGradient id="pg" x1="0" y1="0" x2="0.7" y2="0.6"><stop offset="0" stop-color="#ff35b5"/><stop offset="0.35" stop-color="#c14be6"/><stop offset="1" stop-color="#9f4cf8"/></linearGradient></defs><path d="M0.5 5 L5.2 0.8 L14.5 3 L24.7 2.2 L26.2 10.8 L24.3 15.5 L26.6 21 L16.5 27.2 L8.3 23.3 L3.6 21 L1.2 11.6 Z" fill="url(#pg)"/><rect x="5.1" y="5.8" width="16.1" height="15.6" fill="#070707"/><text x="6.4" y="15" font-family="Liberation Sans,sans-serif" font-size="10.2" font-weight="bold" fill="#fff">PS</text><rect x="6.9" y="18.6" width="6.2" height="1.2" fill="#fff"/></svg>
<svg style="left:607.00px;top:690.00px;" width="26" height="24" viewBox="0 0 26 24"><defs><linearGradient id="kg" x1="0.5" y1="0" x2="0.35" y2="1"><stop offset="0" stop-color="#ff60dd"/><stop offset="0.5" stop-color="#d6b6f4"/><stop offset="0.85" stop-color="#62f0f2"/><stop offset="1" stop-color="#c8fbf4"/></linearGradient><radialGradient id="ky" cx="0.9" cy="0.75" r="0.5"><stop offset="0" stop-color="#fff06a"/><stop offset="0.6" stop-color="#fff06a" stop-opacity="0.55"/><stop offset="1" stop-color="#fff06a" stop-opacity="0"/></radialGradient><radialGradient id="kp" cx="0.95" cy="0.35" r="0.4"><stop offset="0" stop-color="#ffb0c8"/><stop offset="1" stop-color="#ffb0c8" stop-opacity="0"/></radialGradient></defs><circle cx="13" cy="12" r="10.5" fill="url(#kg)"/><circle cx="13" cy="12" r="10.5" fill="url(#kp)"/><circle cx="13" cy="12" r="10.5" fill="url(#ky)"/><path d="M1.3 2.2 L13 10.8" stroke="#4b444c" stroke-width="2.1" stroke-linecap="round"/><path d="M12.6 10.5 L16.4 14.3" stroke="#777079" stroke-width="2.2"/><ellipse cx="17.4" cy="15.9" rx="1.6" ry="2.2" transform="rotate(-35 17.4 15.9)" fill="#2a2230"/></svg>
<svg style="left:639.20px;top:689.70px;" width="24.2" height="24.2" viewBox="0 0 24.2 24.2"><circle cx="12.1" cy="12.1" r="12.1" fill="#1a8cf3"/><path d="M6.2 11.2 L17.6 6.8 L13.2 18.4 L11.6 12.8 Z" fill="#fff"/></svg>
<svg style="left:670.50px;top:690.2px" width="24" height="23.6" viewBox="0 0 24 25" preserveAspectRatio="none"><rect x="9" y="3.6" width="14.2" height="17.8" fill="#fff" stroke="#2b579a" stroke-width="0.9"/><rect x="14.5" y="6.5" width="6.5" height="1.3" fill="#2b579a"/><rect x="14.5" y="9.5" width="6.5" height="1.3" fill="#2b579a"/><rect x="14.5" y="12.5" width="6.5" height="1.3" fill="#2b579a"/><rect x="14.5" y="15.5" width="6.5" height="1.3" fill="#2b579a"/><rect x="14.5" y="18.5" width="6.5" height="1.3" fill="#2b579a"/><path d="M0 2.8 L14 0 V25 L0 22.2 Z" fill="#2b579a"/><text x="7" y="17.2" font-family="Liberation Sans,sans-serif" font-size="12" font-weight="bold" fill="#fff" text-anchor="middle">W</text></svg>
<svg style="left:701.80px;top:690.2px" width="24" height="23.6" viewBox="0 0 24 25" preserveAspectRatio="none"><rect x="9" y="3.6" width="14.2" height="17.8" fill="#fff" stroke="#d24726" stroke-width="0.9"/><path d="M18 6 A4 4 0 1 0 22 10 H18 Z" fill="#d24726"/><rect x="14.5" y="15.5" width="6.5" height="1.3" fill="#d24726"/><rect x="14.5" y="18.3" width="6.5" height="1.3" fill="#d24726"/><path d="M0 2.8 L14 0 V25 L0 22.2 Z" fill="#d24726"/><text x="7" y="17.2" font-family="Liberation Sans,sans-serif" font-size="12" font-weight="bold" fill="#fff" text-anchor="middle">P</text></svg>
<svg style="left:733.00px;top:690.2px" width="24" height="23.6" viewBox="0 0 24 25" preserveAspectRatio="none"><rect x="9" y="3.6" width="14.2" height="17.8" fill="#fff" stroke="#217346" stroke-width="0.9"/><rect x="14.5" y="6" width="3" height="1.7" fill="#217346"/><rect x="18.4" y="6" width="3" height="1.7" fill="#217346"/><rect x="14.5" y="9" width="3" height="1.7" fill="#217346"/><rect x="18.4" y="9" width="3" height="1.7" fill="#217346"/><rect x="14.5" y="12" width="3" height="1.7" fill="#217346"/><rect x="18.4" y="12" width="3" height="1.7" fill="#217346"/><rect x="14.5" y="15" width="3" height="1.7" fill="#217346"/><rect x="18.4" y="15" width="3" height="1.7" fill="#217346"/><rect x="14.5" y="18" width="3" height="1.7" fill="#217346"/><rect x="18.4" y="18" width="3" height="1.7" fill="#217346"/><path d="M0 2.8 L14 0 V25 L0 22.2 Z" fill="#217346"/><text x="7" y="17.2" font-family="Liberation Sans,sans-serif" font-size="12" font-weight="bold" fill="#fff" text-anchor="middle">X</text></svg>
<svg style="left:767.00px;top:689.00px;" width="19.5" height="26" viewBox="0 0 19.5 26"><path d="M0.4 5 L9.4 0.2 L18.5 4.7 L9.8 9.8 L0.4 12.3 Z" fill="#2ddfae"/><path d="M0.6 12.5 L9.8 9.2 L18.8 13.4 L9.8 17 Z" fill="#1f9cf0"/><path d="M18.8 13.4 V20.8 L9.8 25.5 L0.8 21.2 L9.8 17.2 Z" fill="#fb5a80"/></svg>
<div style="left:795.20px;top:688.40px;width:26.00px;height:26.30px;background:#0c3f91;"></div>
<svg style="left:798.40px;top:690.60px;" width="20" height="22" viewBox="0 0 20 22"><path d="M9.8 0.6 C4.5 0.6 1.2 4 1.2 8.4 C1.2 11.6 2.8 13.6 4.4 15 L4.2 21.5 H13.4 L13.6 18.2 H16 Q17.4 18.2 17.3 16.6 L17.1 13.6 L18.9 12.8 Q19.4 12.4 19 11.8 L17 8.6 C17.2 3.6 14.2 0.6 9.8 0.6 Z" fill="#f8f1ee"/><circle cx="10.6" cy="4" r="1.4" fill="#0c3f91"/><circle cx="6.2" cy="6.8" r="1.8" fill="#0c3f91"/><circle cx="11.6" cy="9.6" r="1.5" fill="#0c3f91"/><path d="M10.6 4 L6.2 6.8 L11.6 9.6" stroke="#0c3f91" stroke-width="0.8" fill="none"/></svg>
<svg style="left:827.20px;top:689.90px;" width="24" height="24" viewBox="0 0 24 24"><circle cx="12" cy="12" r="11.9" fill="#f8f3ef"/><circle cx="12" cy="12" r="9.4" fill="#3f8fdd"/><path d="M7.4 2.6 C3.6 8.6 8.6 11 12 12 C15.6 13.2 20 15.6 16.4 21.6" stroke="#f8f3ef" stroke-width="2.7" fill="none"/></svg>
<svg style="left:989.50px;top:699.00px;" width="12.5" height="6.6" viewBox="0 0 12.5 6.6"><path d="M0.6 6.2 L6.25 0.7 L11.9 6.2" stroke="#e6e6e6" stroke-width="1" fill="none"/></svg>
<svg style="left:1016.50px;top:695.30px;" width="11" height="13" viewBox="0 0 11 13"><path d="M0.5 2.6 H10.5 M3.6 2.4 V0.6 H7.4 V2.4 M1.8 2.8 V11.4 Q1.8 12.4 2.8 12.4 H8.2 Q9.2 12.4 9.2 11.4 V2.8" stroke="#e6e6e6" stroke-width="1" fill="none"/></svg>
<svg style="left:1041.80px;top:697.80px;" width="14.6" height="8.4" viewBox="0 0 14.6 8.4"><rect x="0.5" y="0.5" width="12.2" height="7.4" stroke="#e6e6e6" stroke-width="1" fill="none"/><rect x="13.2" y="2.6" width="1.2" height="3.2" fill="#e6e6e6"/><rect x="1.8" y="1.8" width="3.4" height="4.8" fill="#e6e6e6"/></svg>
<svg style="left:1069.60px;top:696.50px;" width="11.6" height="11.2" viewBox="0 0 11.6 11.2"><path d="M0.8 10.6 A10 10 0 0 1 10.8 0.7" stroke="#9a9a9a" stroke-width="0.9" fill="none"/><path d="M3.6 10.6 A7.2 7.2 0 0 1 10.8 3.5" stroke="#b5b5b5" stroke-width="0.9" fill="none"/><path d="M6.4 10.6 A4.4 4.4 0 0 1 10.8 6.3" stroke="#e6e6e6" stroke-width="0.9" fill="none"/><circle cx="10" cy="9.8" r="1.1" fill="#e6e6e6"/></svg>
<svg style="left:1094.50px;top:696.50px;" width="15" height="11.5" viewBox="0 0 15 11.5"><path d="M0.6 3.9 H3 L5.6 1.5 V10 L3 7.6 H0.6 Z" stroke="#e6e6e6" stroke-width="0.9" fill="none"/><path d="M7.8 4 Q9 5.75 7.8 7.5" stroke="#e6e6e6" stroke-width="0.9" fill="none"/><path d="M9.8 2.7 Q12 5.75 9.8 8.8" stroke="#b0b0b0" stroke-width="0.9" fill="none"/><path d="M11.8 1.6 Q14.6 5.75 11.8 9.9" stroke="#8a8a8a" stroke-width="0.9" fill="none"/></svg>
<svg style="left:1124.50px;top:694.50px;" width="15" height="15" viewBox="0 0 15 15"><path d="M11.2 1.4 L6 12" stroke="#e6e6e6" stroke-width="3" stroke-linecap="round" fill="none"/><path d="M11.2 1.4 L6 12" stroke="#1e1a17" stroke-width="1.1" stroke-linecap="round" fill="none"/><path d="M5.6 13.1 Q2.4 14.6 1.2 12.2 Q0.5 9.6 3.4 9.1 Q6 9 8.6 7.5 Q11 5.9 12.6 6.5 Q14.2 7.6 12.8 8.8" stroke="#e6e6e6" stroke-width="1" fill="none"/></svg>
<div class="t" style="left:1154.00px;top:696.03px;font-family:'Liberation Sans',sans-serif;font-size:10px;line-height:13.0px;color:#e6e6e6;letter-spacing:-0.891px;">ENG</div>
<div class="t" style="left:1195.70px;top:687.64px;font-family:'Liberation Sans',sans-serif;font-size:10.4px;line-height:13.52px;color:#e6e6e6;letter-spacing:-0.743px;">19:57</div>
<div class="t" style="left:1184.30px;top:703.44px;font-family:'Liberation Sans',sans-serif;font-size:10.4px;line-height:13.52px;color:#e6e6e6;letter-spacing:-0.602px;">30.09.2019</div>
<svg style="left:1246.00px;top:695.00px;" width="14" height="13.2" viewBox="0 0 14 13.2"><path d="M0.5 0.5 H13.5 V10 H8.6 L7 12.4 L5.4 10 H0.5 Z" stroke="#e6e6e6" stroke-width="1" fill="none"/></svg>
<div style="left:1276.00px;top:684.00px;width:0.80px;height:36.00px;background:#6a6662;"></div>
</div>
</body></html>
